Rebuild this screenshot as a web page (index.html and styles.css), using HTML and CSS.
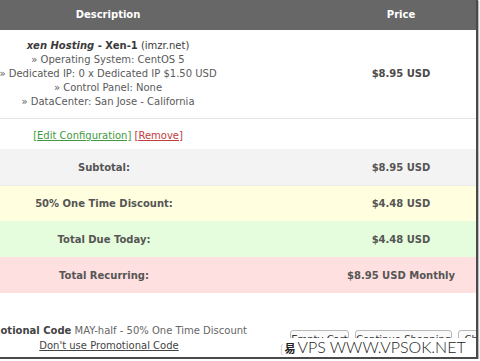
FILE: index.html
```html
<!DOCTYPE html>
<html>
<head>
<meta charset="utf-8">
<link rel="stylesheet" href="styles.css">
</head>
<body>
<div class="frame">
  <div class="cart">
    <div class="row head">
      <div class="c-desc">Description</div>
      <div class="c-price">Price</div>
    </div>
    <div class="row product">
      <div class="c-desc">
        <div class="title"><b><i>xen Hosting</i> - Xen-1</b> (imzr.net)</div>
        <div>» Operating System: CentOS 5</div>
        <div>» Dedicated IP: 0 x Dedicated IP $1.50 USD</div>
        <div>» Control Panel: None</div>
        <div>» DataCenter: San Jose - California</div>
      </div>
      <div class="c-price strong">$8.95 USD</div>
    </div>
    <div class="row edit">
      <div class="c-desc"><a class="green" href="#">[Edit Configuration]</a> <a class="red" href="#">[Remove]</a></div>
      <div class="c-price"></div>
    </div>
    <div class="row total subtotal">
      <div class="c-desc label">Subtotal:</div>
      <div class="c-price">$8.95 USD</div>
    </div>
    <div class="row total discount">
      <div class="c-desc label">50% One Time Discount:</div>
      <div class="c-price">$4.48 USD</div>
    </div>
    <div class="row total due">
      <div class="c-desc label">Total Due Today:</div>
      <div class="c-price">$4.48 USD</div>
    </div>
    <div class="row total recurring">
      <div class="c-desc label">Total Recurring:</div>
      <div class="c-price">$8.95 USD Monthly</div>
    </div>
    <div class="promo-row">
      <div class="promo">
        <div><b>Promotional Code</b> MAY-half - 50% One Time Discount</div>
        <div><a class="plain" href="#">Don't use Promotional Code</a></div>
      </div>
      <div class="buttons">
        <span class="btn b1">Empty Cart</span>
        <span class="btn b2">Continue Shopping</span>
        <span class="btn b3">Checkout</span>
      </div>
    </div>
  </div>
  <div class="watermark"><span class="brace">{</span><span class="logo">易</span>VPS WWW.VPSOK.NET</div>
</div>
</body>
</html>
```

FILE: styles.css
```css
html, body {
  margin: 0;
  padding: 0;
  background: #ffffff;
}
body {
  font-family: "DejaVu Sans", Verdana, sans-serif;
  font-size: 10px;
  color: #555555;
}
.frame {
  position: relative;
  width: 476px;
  height: 357px;
  border-right: 2px solid #4a4a4a;
  border-bottom: 2px solid #4a4a4a;
  box-shadow: 1px 1px 1px #bbbbbb;
  overflow: hidden;
}
.cart {
  margin-left: -110px;
  width: 586px;
}
.row {
  display: grid;
  grid-template-columns: 436px 150px;
  align-items: center;
  text-align: center;
}
.head {
  height: 30px;
  background: #676767;
  color: #ffffff;
  font-weight: bold;
  line-height: 28px;
}
.product {
  height: 88px;
  border-bottom: 1px solid #e4e4e4;
  line-height: 14px;
  color: #5a5a5a;
}
.product .title,
.product .title b {
  color: #3a3a3a;
}
.strong {
  font-weight: bold;
  color: #4a4a4a;
}
.edit {
  height: 30px;
}
.edit .c-desc {
  padding-top: 2px;
}
a.green {
  color: #3f9a3f;
}
a.red {
  color: #c04040;
}
.total {
  height: 36px;
  font-weight: bold;
  color: #555555;
}
.total .label {
  padding-right: 8px;
}
.subtotal {
  background: #f3f3f3;
  border-bottom: 1px solid #ececec;
  height: 36px;
}
.discount {
  background: #ffffdf;
  height: 35px;
}
.due {
  background: #e5fddc;
}
.recurring {
  background: #ffe0e0;
}
.promo-row {
  display: flex;
  align-items: flex-start;
  padding-top: 30px;
}
.promo {
  flex-shrink: 0;
  width: 362px;
  padding-left: 38px;
  text-align: center;
  line-height: 15px;
  color: #666666;
  white-space: nowrap;
}
.promo b {
  color: #444444;
}
a.plain {
  color: #444444;
}
.buttons {
  display: flex;
  gap: 6px;
  padding-top: 7px;
  white-space: nowrap;
}
.btn {
  flex-shrink: 0;
  display: block;
  box-sizing: border-box;
  height: 20px;
  line-height: 18px;
  border: 1px solid #b8b8b8;
  border-radius: 3px;
  background: #fafafa;
  color: #333333;
  font-size: 10px;
  text-align: center;
  overflow: hidden;
}
.b1 { width: 59px; }
.b2 { width: 97px; }
.b3 { width: 60px; }
.watermark {
  position: absolute;
  left: 280px;
  top: 338px;
  width: 196px;
  height: 18px;
  background: #ffffff;
  font-family: "Lato", "DejaVu Sans", sans-serif;
  font-weight: 300;
  font-size: 16px;
  line-height: 18px;
  color: #222222;
  white-space: nowrap;
}
.brace {
  font-size: 12px;
  color: #aaaaaa;
  margin-right: 1px;
}
.logo {
  font-family: "Noto Sans CJK SC", sans-serif;
  font-size: 11px;
  font-weight: bold;
  margin-right: 2px;
}
```
